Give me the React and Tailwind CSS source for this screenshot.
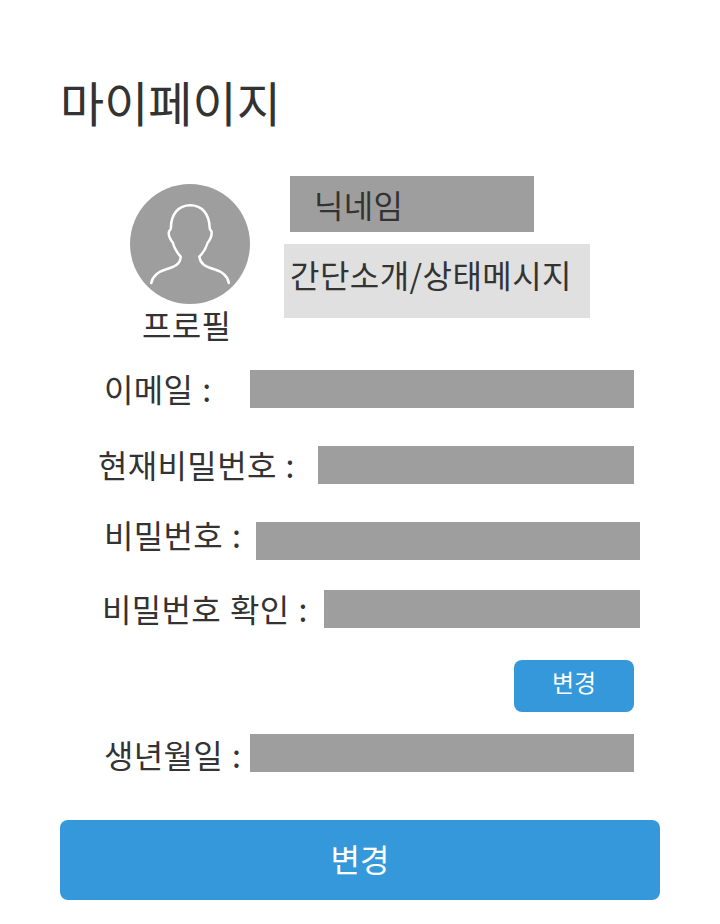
function Avatar() {
  return (
    <svg className="block size-[120px]" viewBox="0 0 120 120" fill="none">
      <circle cx="60" cy="60" r="60" fill="#9e9e9e" />
      <path
        d="M21.3 99C22.5 92 28.5 87.5 37 85C45.5 82.5 50.5 79.5 50.7 72.7C47 68.5 44 63.5 42.8 58.5C40 55 38.2 50.5 39 47.5C39.4 45.8 40.8 46.5 40.9 44C41 30 48.5 21.3 60.3 21.3C72 21.3 79.3 30 79.7 44C79.8 46.5 81.2 45.8 81.5 47.5C82 50.5 80.5 55 77.8 58.5C76.3 63.5 73.5 68.5 69.3 72.7C70 79.5 75 82.5 83.5 85C92 87.5 97.8 92 98.8 99"
        stroke="#fff"
        strokeWidth="2.5"
        strokeLinecap="round"
        strokeLinejoin="round"
      />
    </svg>
  );
}

function Field({ label, row, text, bar }) {
  return (
    <div className={`flex h-[38px] items-start ${row}`}>
      <label className={`shrink-0 whitespace-pre text-[32px] leading-[38px] tracking-[0.35px] [word-spacing:1.3px] ${text}`}>
        {label}
      </label>
      <div className={`h-[38px] shrink-0 bg-[#9e9e9e] ${bar}`} />
    </div>
  );
}

export default function App() {
  return (
    <main className="flow-root h-[924px] w-[720px] overflow-hidden bg-white font-['Noto_Sans_CJK_KR',sans-serif] text-[#333]">
      <h1 className="ml-[60px] mt-[66px] h-[70px] text-[48px] leading-[70px]">마이페이지</h1>

      <section className="mt-[40px] flex h-[194px] items-start">
        <div className="ml-[130px] mt-[8px] w-[120px]">
          <Avatar />
          <p className="ml-[12px] whitespace-nowrap text-[32px] leading-[40px] tracking-[0.35px]">프로필</p>
        </div>
        <div className="ml-[34px] flex w-[306px] flex-col gap-3">
          <div className="ml-[6px] h-[56px] w-[244px] bg-[#9e9e9e] pl-[24px] text-[32px] leading-[56px] tracking-[0.35px]">닉네임</div>
          <div className="h-[74px] whitespace-nowrap bg-[#e0e0e0] pl-[6px] text-[32px] leading-[60px] tracking-[0.45px]">간단소개/상태메시지</div>
        </div>
      </section>

      <Field label="이메일 :" row="" text="ml-[104px] w-[146px] -mt-px" bar="w-[384px]" />
      <Field label="현재비밀번호 :" row="mt-[38px]" text="ml-[98px] w-[220px] -mt-px" bar="w-[316px]" />
      <Field label="비밀번호 :" row="mt-[38px]" text="ml-[104px] w-[152px] -mt-[7px]" bar="w-[384px]" />
      <Field label="비밀번호 확인 :" row="mt-[30px]" text="ml-[102px] w-[222px] -mt-px" bar="w-[316px]" />

      <button className="ml-[514px] mt-[32px] block h-[52px] w-[120px] rounded-[8px] bg-[#3498db] pb-[8px] text-[24px] leading-[44px] text-white">변경</button>

      <Field label="생년월일 :" row="mt-[22px]" text="ml-[104px] w-[146px] mt-[1px]" bar="w-[384px]" />

      <button className="ml-[60px] mt-[48px] block h-[80px] w-[600px] rounded-[8px] bg-[#3498db] pb-[4px] text-[32px] leading-[76px] text-white">변경</button>
    </main>
  );
}
